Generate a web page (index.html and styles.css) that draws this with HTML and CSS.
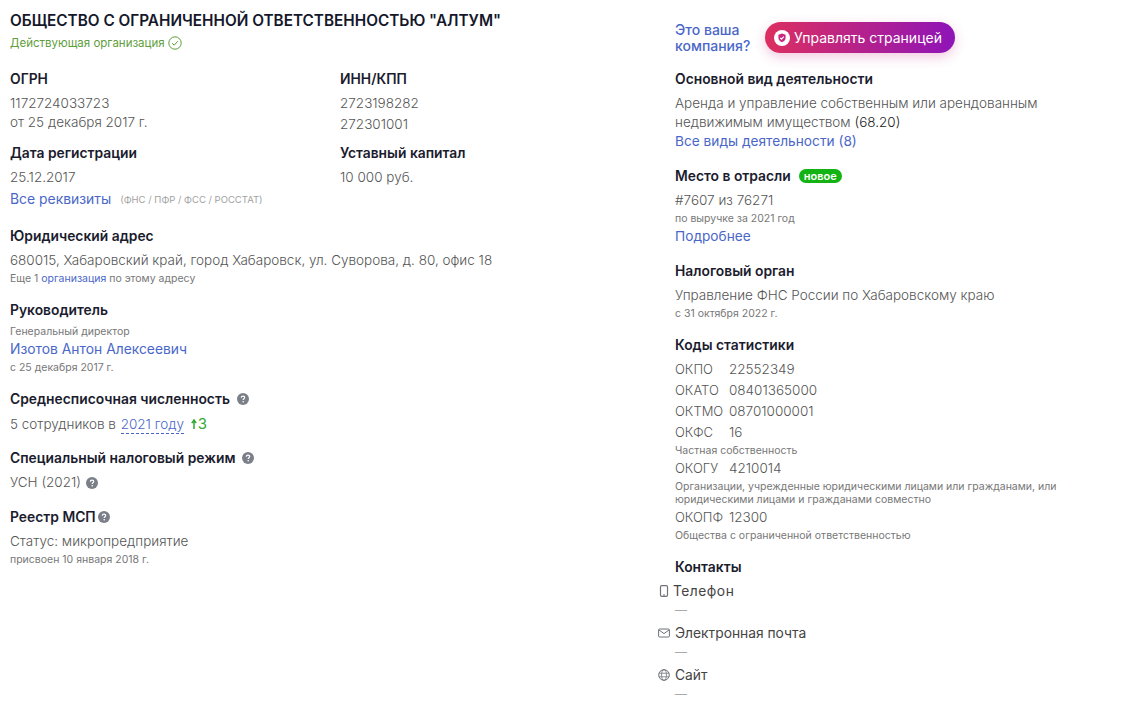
FILE: index.html
```html
<!DOCTYPE html>
<html lang="ru">
<head>
<meta charset="utf-8">
<title>ООО "АЛТУМ"</title>
<link rel="stylesheet" href="styles.css">
</head>
<body>
<svg class="defs" width="0" height="0" aria-hidden="true">
  <symbol id="q" viewBox="0 0 12 12"><circle cx="6" cy="6" r="6" fill="#7b7f88"/><path d="M4.3 4.7c0-1 .8-1.6 1.7-1.6s1.7.6 1.7 1.5c0 1.2-1.5 1.2-1.5 2.4" fill="none" stroke="#fff" stroke-width="1.2"/><circle cx="6.2" cy="8.8" r=".8" fill="#fff"/></symbol>
</svg>
<div class="page">
  <main class="left">
    <h1 class="title">ОБЩЕСТВО С ОГРАНИЧЕННОЙ ОТВЕТСТВЕННОСТЬЮ "АЛТУМ"</h1>
    <div class="status">Действующая организация
      <svg class="status-icon" viewBox="0 0 14 14"><circle cx="7" cy="7" r="6.2" fill="none" stroke="#5f9e3c"/><path d="M4.2 7.2l2 2 3.6-4" fill="none" stroke="#5f9e3c"/></svg>
    </div>
    <div class="req-grid">
      <div class="req-col">
        <div class="label">ОГРН</div>
        <div class="value v-first">1172724033723</div>
        <div class="value">от 25 декабря 2017 г.</div>
      </div>
      <div class="req-col">
        <div class="label">ИНН/КПП</div>
        <div class="value v-first">2723198282</div>
        <div class="value v-tall">272301001</div>
      </div>
      <div class="req-col">
        <div class="label">Дата регистрации</div>
        <div class="value v-first">25.12.2017</div>
      </div>
      <div class="req-col">
        <div class="label">Уставный капитал</div>
        <div class="value v-first">10 000 руб.</div>
      </div>
    </div>
    <div class="all-req"><a class="link l-big" href="#">Все реквизиты</a><span class="sources">(ФНС / ПФР / ФСС / РОССТАТ)</span></div>

    <section class="block b-address">
      <div class="label">Юридический адрес</div>
      <div class="value v-first">680015, Хабаровский край, город Хабаровск, ул. Суворова, д. 80, офис 18</div>
      <div class="small">Еще 1 <a class="small-link" href="#">организация</a> по этому адресу</div>
    </section>

    <section class="block b-head">
      <div class="label">Руководитель</div>
      <div class="small s-role">Генеральный директор</div>
      <a class="link l-big person" href="#">Изотов Антон Алексеевич</a>
      <div class="small">с 25 декабря 2017 г.</div>
    </section>

    <section class="block b-staff">
      <div class="label">Среднесписочная численность <svg class="help h-tight"><use href="#q"/></svg></div>
      <div class="value v-first">5 сотрудников в <a class="dashed" href="#">2021 году</a> <span class="delta"><svg class="delta-arrow" viewBox="0 0 6 10"><path d="M3 10V2M.8 4.2L3 1l2.2 3.2" fill="none" stroke="#33a833" stroke-width="1.5"/></svg>3</span></div>
    </section>

    <section class="block b-tax">
      <div class="label">Специальный налоговый режим <svg class="help h-tight"><use href="#q"/></svg></div>
      <div class="value v-first">УСН (2021) <svg class="help h-val"><use href="#q"/></svg></div>
    </section>

    <section class="block b-msp">
      <div class="label">Реестр МСП <svg class="help h-near"><use href="#q"/></svg></div>
      <div class="value v-first">Статус: микропредприятие</div>
      <div class="small">присвоен 10 января 2018 г.</div>
    </section>
  </main>

  <aside class="right">
    <div class="claim">
      <a class="claim-q" href="#">Это ваша<br>компания?</a>
      <a class="manage" href="#">
        <svg class="manage-icon" viewBox="0 0 16 16"><circle cx="8" cy="8" r="8" fill="#fff"/><path d="M8 3.6l3.6 1.2v3c0 2.2-1.6 3.6-3.6 4.4-2-.8-3.6-2.2-3.6-4.4v-3z" fill="#c9287f"/><path d="M6.2 7.8l1.3 1.3 2.3-2.4" fill="none" stroke="#fff" stroke-width="1.1"/></svg>
        Управлять страницей
      </a>
    </div>

    <section class="rblock r-main">
      <div class="label">Основной вид деятельности</div>
      <div class="value v-first">Аренда и управление собственным или арендованным</div>
      <div class="value">недвижимым имуществом <span class="code">(68.20)</span></div>
      <a class="link" href="#">Все виды деятельности (8)</a>
    </section>

    <section class="rblock">
      <div class="label">Место в отрасли <span class="badge">новое</span></div>
      <div class="value v-first">#7607 из 76271</div>
      <div class="small">по выручке за 2021 год</div>
      <a class="link l-after" href="#">Подробнее</a>
    </section>

    <section class="rblock">
      <div class="label">Налоговый орган</div>
      <div class="value v-first">Управление ФНС России по Хабаровскому краю</div>
      <div class="small">с 31 октября 2022 г.</div>
    </section>

    <section class="rblock r-codes">
      <div class="label">Коды статистики</div>
      <div class="code-row c-first"><span class="code-name">ОКПО</span><span>22552349</span></div>
      <div class="code-row"><span class="code-name">ОКАТО</span><span>08401365000</span></div>
      <div class="code-row"><span class="code-name">ОКТМО</span><span>08701000001</span></div>
      <div class="code-row"><span class="code-name">ОКФС</span><span>16</span></div>
      <div class="small s-code">Частная собственность</div>
      <div class="code-row c-after"><span class="code-name">ОКОГУ</span><span>4210014</span></div>
      <div class="small s-code s-wrap">Организации, учрежденные юридическими лицами или гражданами, или юридическими лицами и гражданами совместно</div>
      <div class="code-row c-after"><span class="code-name">ОКОПФ</span><span>12300</span></div>
      <div class="small s-code">Общества с ограниченной ответственностью</div>
    </section>

    <section class="r-contacts">
      <div class="label">Контакты</div>
      <div class="contact c-phone">
        <svg class="c-icon i-phone" viewBox="0 0 12 12"><rect x="2.5" y=".7" width="7" height="10.6" rx="1.3" fill="none" stroke="#6f7278" stroke-width="1.2"/><path d="M5 10h2" stroke="#6f7278"/></svg>
        <span class="c-name n-phone">Телефон</span>
      </div>
      <div class="dash">—</div>
      <div class="contact">
        <svg class="c-icon" viewBox="0 0 12 12"><rect x=".6" y="2" width="10.8" height="8" rx="1" fill="none" stroke="#6f7278"/><path d="M1 3l5 3.6L11 3" fill="none" stroke="#6f7278"/></svg>
        <span class="c-name">Электронная почта</span>
      </div>
      <div class="dash">—</div>
      <div class="contact">
        <svg class="c-icon" viewBox="0 0 12 12"><circle cx="6" cy="6" r="5.3" fill="none" stroke="#6f7278"/><ellipse cx="6" cy="6" rx="2.4" ry="5.3" fill="none" stroke="#6f7278" stroke-width=".8"/><path d="M1 4.2h10M1 7.8h10" stroke="#6f7278" stroke-width=".8"/></svg>
        <span class="c-name">Сайт</span>
      </div>
      <div class="dash">—</div>
    </section>
  </aside>
</div>
</body>
</html>
```

FILE: styles.css
```css
* { box-sizing: border-box; }
html, body { margin: 0; padding: 0; background: #fff; }
body {
  font-family: Inter, "Noto Sans", "Liberation Sans", sans-serif;
  color: #555;
  font-size: 13.5px;
  height: 719px;
  overflow: hidden;
}
.defs { position: absolute; }
.page {
  display: flex;
  padding: 11px 0 0 10px;
}
.left { width: 665px; flex: none; }
.right { width: 400px; flex: none; }
.title {
  margin: 0;
  font-size: 15.32px;
  line-height: 20px;
  font-weight: 600;
  color: #15172b;
  white-space: nowrap;
}
.status {
  margin-top: 2px;
  height: 20px;
  line-height: 20px;
  font-size: 11.5px;
  color: #5f9e3c;
  display: flex;
  align-items: center;
  gap: 3px;
}
.status-icon { width: 14px; height: 14px; }
.req-grid {
  margin-top: 16px;
  display: grid;
  grid-template-columns: 330px 300px;
  row-gap: 9px;
}
.label {
  height: 20px;
  line-height: 20px;
  font-size: 13.85px;
  font-weight: 600;
  color: #1b1c2e;
  white-space: nowrap;
  display: flex;
  align-items: center;
  gap: 4px;
}
.value {
  height: 19px;
  line-height: 19px;
  font-size: 13.5px;
  font-weight: 300;
  color: #555;
  white-space: nowrap;
}
.v-first { margin-top: 5px; }
.v-tall { margin-top: 2px; }
.small {
  font-size: 10.5px;
  line-height: 13px;
  margin-top: 2px;
  color: #777;
  font-weight: 400;
}
.small-link { color: #4a67c8; text-decoration: none; }
.link {
  display: block;
  height: 19px;
  line-height: 19px;
  font-size: 13.7px;
  color: #4a67c8;
  text-decoration: none;
  font-weight: 400;
}
.l-big { font-size: 13.9px; }
.l-after { margin-top: 2px; }
.all-req { display: flex; align-items: center; height: 19px; margin-top: 3px; }
.sources { margin-left: 9px; font-size: 9.5px; color: #a2a2a2; }
.block { margin-top: 15px; }
.b-address { margin-top: 17px; }
.s-role { margin-top: 5px; }
.person { margin-top: 2px; font-size: 13.85px; }
.help { width: 12px; height: 12px; flex: none; margin-left: 4px; }
.h-tight { margin-left: 3px; }
.h-near { margin-left: -2px; }
.h-val { vertical-align: -2px; margin-left: 1px; }
.dashed {
  color: #4a67c8;
  text-decoration: none;
  border-bottom: 1px dashed #4a67c8;
  padding-bottom: 1px;
  margin-left: 1px;
}
.delta { color: #33a833; font-weight: 400; font-size: 15px; margin-left: 3px; }
.delta-arrow { width: 6px; height: 10px; margin-right: 1px; }
.claim { display: flex; align-items: center; height: 31px; margin-top: 11px; }
.claim-q {
  width: 90px;
  flex: none;
  color: #4a67c8;
  font-size: 14px;
  font-weight: 500;
  line-height: 16px;
  text-decoration: none;
}
.manage {
  width: 190px;
  height: 31px;
  border-radius: 16px;
  background: linear-gradient(90deg, #dc2f60, #8e14b8);
  box-shadow: 0 4px 12px rgba(200, 40, 130, .25);
  color: #fff;
  font-size: 14px;
  font-weight: 400;
  text-decoration: none;
  display: flex;
  align-items: center;
  gap: 4px;
  padding-left: 9px;
  white-space: nowrap;
}
.manage-icon { width: 16px; height: 16px; flex: none; }
.rblock { margin-top: 15px; }
.r-main { margin-top: 16px; }
.code { color: #222; }
.badge {
  margin-left: 4px;
  background: #12b312;
  color: #fff;
  font-size: 11px;
  font-weight: 600;
  line-height: 14px;
  height: 14px;
  padding: 0 5px;
  border-radius: 7px;
}
.code-row {
  display: flex;
  height: 21px;
  line-height: 21px;
  font-weight: 300;
  color: #555;
  font-size: 13.5px;
}
.c-first { margin-top: 4px; }
.c-after { margin-top: 1px; }
.code-name { width: 54px; flex: none; font-size: 13px; }
.s-code { margin-top: 1px; }
.s-wrap { width: 400px; }
.r-contacts { margin-top: 15px; }
.contact {
  height: 21px;
  margin: 3px 0 0 -17px;
  display: flex;
  align-items: center;
  gap: 5px;
  font-size: 13.8px;
  color: #444;
}
.c-icon { width: 12px; height: 12px; flex: none; }
.c-phone { gap: 3px; }
.n-phone { letter-spacing: .5px; }
.dash { height: 18px; line-height: 18px; color: #aaa; font-size: 12px; }
```
